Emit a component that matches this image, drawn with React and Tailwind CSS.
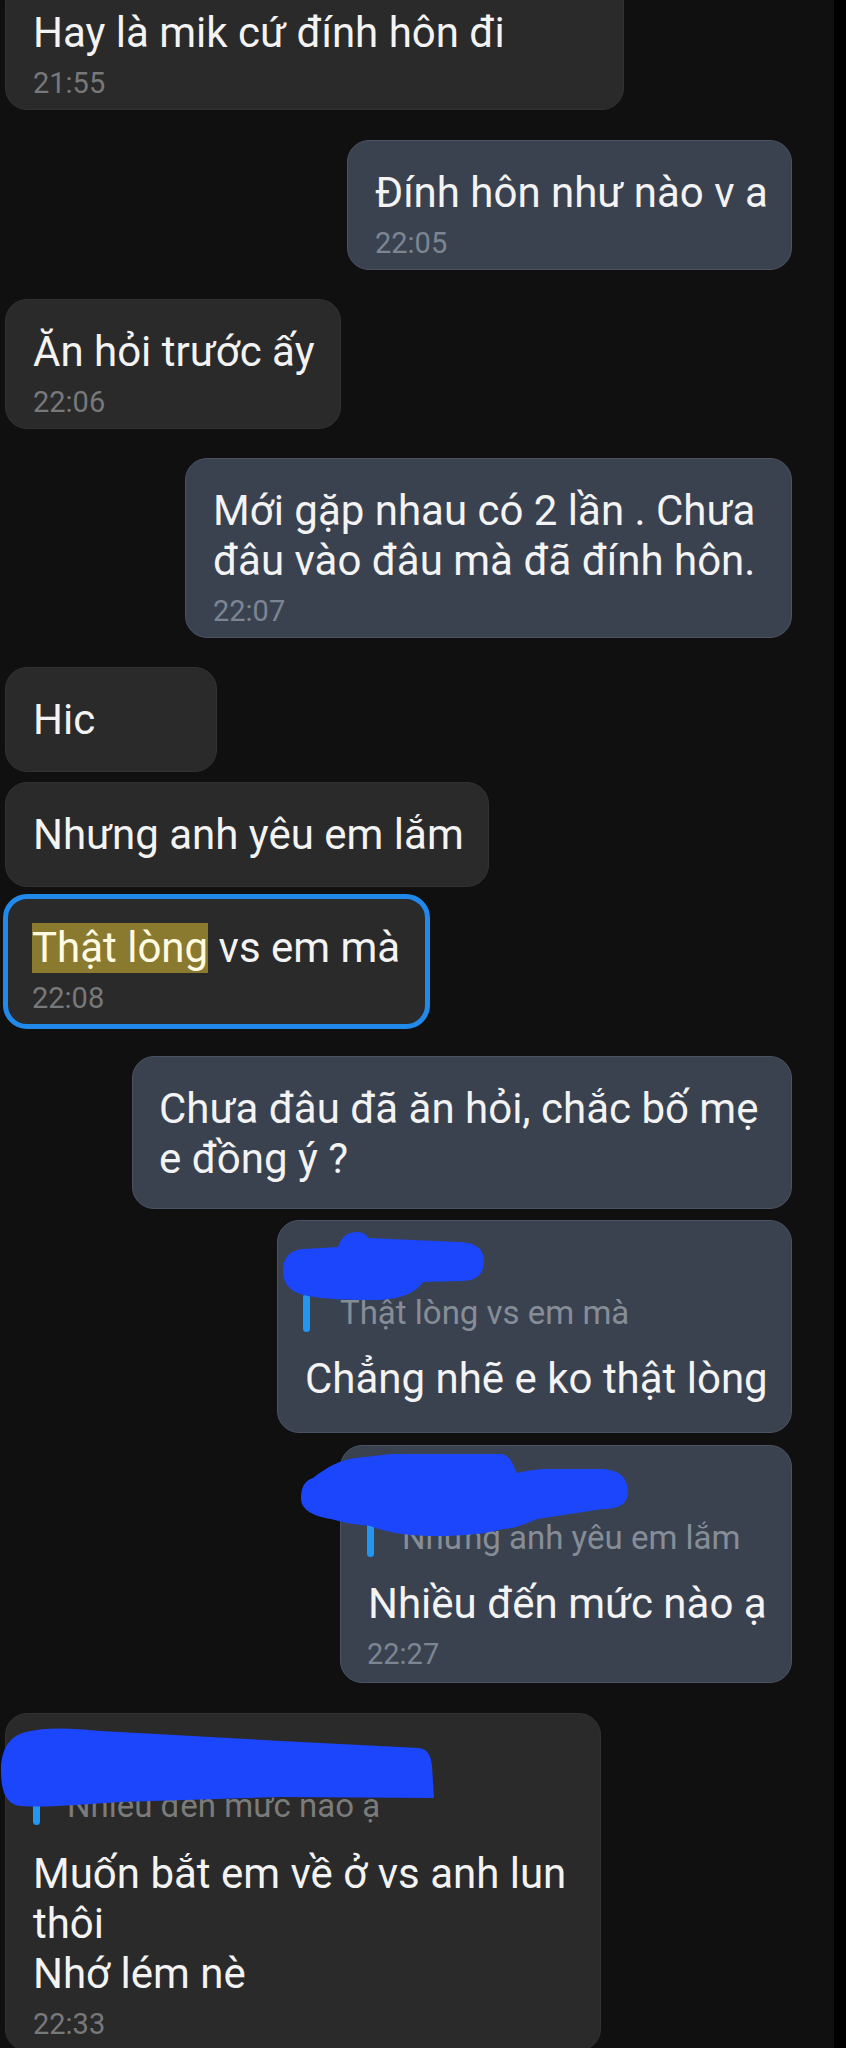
import React from "react";

const F = "font-['Roboto',sans-serif]";

function Main({ children }) {
  return (
    <div className="whitespace-nowrap text-[42px] leading-[50px] text-[#f3f3f3]">
      {children}
    </div>
  );
}

function TimeL({ children }) {
  return <div className="mt-[8px] text-[29px] leading-[34px] text-[#77787a]">{children}</div>;
}

function TimeR({ children }) {
  return <div className="mt-[8px] text-[29px] leading-[34px] text-[#7c8592]">{children}</div>;
}

export default function App() {
  return (
    <div className={`${F} flex h-[2048px] w-[846px] overflow-hidden bg-[#101010]`}>
      <div className="flex flex-1 flex-col">
        {/* 1 */}
        <div className="-mt-[20px] ml-[5px] w-[619px] self-start rounded-[22px] border border-[#323232] bg-[#2a2a2a] pb-[9px] pl-[27px] pr-[27px] pt-[27px]">
          <Main>Hay là mik cứ đính hôn đi</Main>
          <TimeL>21:55</TimeL>
        </div>

        {/* 2 */}
        <div className="mr-[42px] mt-[30px] w-[445px] self-end rounded-[22px] border border-[#4a5362] bg-[#3a4250] pb-[9px] pl-[27px] pr-[27px] pt-[27px]">
          <Main>Đính hôn như nào v a</Main>
          <TimeR>22:05</TimeR>
        </div>

        {/* 3 */}
        <div className="ml-[5px] mt-[29px] w-[336px] self-start rounded-[22px] border border-[#323232] bg-[#2a2a2a] pb-[9px] pl-[27px] pr-[27px] pt-[27px]">
          <Main>Ăn hỏi trước ấy</Main>
          <TimeL>22:06</TimeL>
        </div>

        {/* 4 */}
        <div className="mr-[42px] mt-[29px] w-[607px] self-end rounded-[22px] border border-[#4a5362] bg-[#3a4250] pb-[9px] pl-[27px] pr-[27px] pt-[27px]">
          <Main>Mới gặp nhau có 2 lần . Chưa</Main>
          <Main>đâu vào đâu mà đã đính hôn.</Main>
          <TimeR>22:07</TimeR>
        </div>

        {/* Hic */}
        <div className="ml-[5px] mt-[29px] w-[212px] self-start rounded-[22px] border border-[#323232] bg-[#2a2a2a] pb-[26px] pl-[27px] pr-[27px] pt-[27px]">
          <Main>Hic</Main>
        </div>

        {/* Nhưng */}
        <div className="ml-[5px] mt-[10px] w-[484px] self-start rounded-[22px] border border-[#323232] bg-[#2a2a2a] pb-[26px] pl-[27px] pr-[27px] pt-[27px]">
          <Main>Nhưng anh yêu em lắm</Main>
        </div>

        {/* Thật lòng (selected) */}
        <div className="ml-[3px] mt-[7px] w-[427px] self-start rounded-[24px] border-[5px] border-[#2189ea] bg-[#2a2a2a] pb-[9px] pl-[24px] pr-[23px] pt-[24px]">
          <Main>
            <span className="inline-block bg-[#8a7a2f] text-[#fffbe3]">Thật lòng</span> vs em mà
          </Main>
          <TimeL>22:08</TimeL>
        </div>

        {/* Chưa đâu */}
        <div className="mr-[42px] mt-[27px] w-[660px] self-end rounded-[22px] border border-[#4a5362] bg-[#3a4250] pb-[24px] pl-[26px] pr-[27px] pt-[27px]">
          <Main>Chưa đâu đã ăn hỏi, chắc bố mẹ</Main>
          <Main>e đồng ý ?</Main>
        </div>

        {/* Reply 1 */}
        <div className="relative mr-[42px] mt-[11px] w-[515px] self-end rounded-[22px] border border-[#4a5362] bg-[#3a4250] pb-[28px] pl-[25px] pr-[27px] pt-[27px]">
          <div className="h-[38px]" />
          <div className="mt-[8px] flex h-[38px] items-stretch">
            <div className="w-[7px] rounded-full bg-[#2196f3]" />
            <div className="ml-[30px] whitespace-nowrap text-[33px] leading-[38px] text-[#868d97]">Thật lòng vs em mà</div>
          </div>
          <div className="mt-[22px] pl-[2px]">
            <Main>Chẳng nhẽ e ko thật lòng</Main>
          </div>
          <svg className="pointer-events-none absolute left-0 top-0 h-[95px] w-[220px]" viewBox="0 0 220 95">
            <path
              d="M5,50 C5,36 12,29 25,28 L60,26 C64,14 72,11 78,11 C86,11 89,14 90,17 L180,21 C200,21 206,30 206,40 C206,52 200,59 185,60 L145,61 C138,72 120,80 92,79 C70,79 45,78 30,75 C12,72 5,62 5,50 Z"
              fill="#1b46fc"
            />
          </svg>
        </div>

        {/* Reply 2 */}
        <div className="relative mr-[42px] mt-[12px] w-[452px] self-end rounded-[22px] border border-[#4a5362] bg-[#3a4250] pb-[11px] pl-[26px] pr-[27px] pt-[27px]">
          <div className="h-[38px]" />
          <div className="mt-[8px] flex h-[38px] items-stretch">
            <div className="w-[7px] rounded-full bg-[#2196f3]" />
            <div className="ml-[28px] whitespace-nowrap text-[33px] leading-[38px] text-[#868d97]">Nhưng anh yêu em lắm</div>
          </div>
          <div className="mt-[22px] pl-[1px]">
            <Main>Nhiều đến mức nào ạ</Main>
          </div>
          <TimeR>22:27</TimeR>
          <svg className="pointer-events-none absolute left-[-40px] top-0 h-[95px] w-[330px]" viewBox="0 0 330 95">
            <path
              d="M0,52 C0,40 5,34 12,32 C25,22 38,14 55,12 L90,8 L200,8 C210,9 212,20 216,27 C225,25 235,23 250,23 L300,23 C318,23 327,32 327,46 C327,58 318,63 302,63 L236,73 C225,78 215,82 202,83 C180,90 130,92 102,88 C85,86 75,82 69,80 C50,78 40,76 30,73 C12,70 0,64 0,52 Z"
              fill="#1b46fc"
            />
          </svg>
        </div>

        {/* Last */}
        <div className="relative ml-[5px] mt-[30px] w-[596px] self-start rounded-[22px] border border-[#323232] bg-[#2a2a2a] pb-[9px] pl-[27px] pr-[27px] pt-[27px]">
          <div className="h-[38px]" />
          <div className="mt-[8px] flex h-[38px] items-stretch">
            <div className="w-[7px] rounded-full bg-[#2196f3]" />
            <div className="ml-[27px] whitespace-nowrap text-[33px] leading-[38px] text-[#7b7b7b]">Nhiều đến mức nào ạ</div>
          </div>
          <div className="mt-[24px]">
            <Main>Muốn bắt em về ở vs anh lun</Main>
            <Main>thôi</Main>
            <Main>Nhớ lém nè</Main>
          </div>
          <TimeL>22:33</TimeL>
          <svg className="pointer-events-none absolute left-[-5px] top-0 h-[100px] w-[440px]" viewBox="0 0 440 100">
            <path
              d="M0,56 C0,36 8,22 25,18 C45,13 70,14 100,17 L280,27 L418,34 C427,35 430,42 431,52 L433,84 L280,83 L120,88 C80,90 50,94 20,92 C5,91 0,77 0,56 Z"
              fill="#1b46fc"
            />
          </svg>
        </div>
      </div>
      <div className="w-[12px] shrink-0 bg-black" />
    </div>
  );
}
